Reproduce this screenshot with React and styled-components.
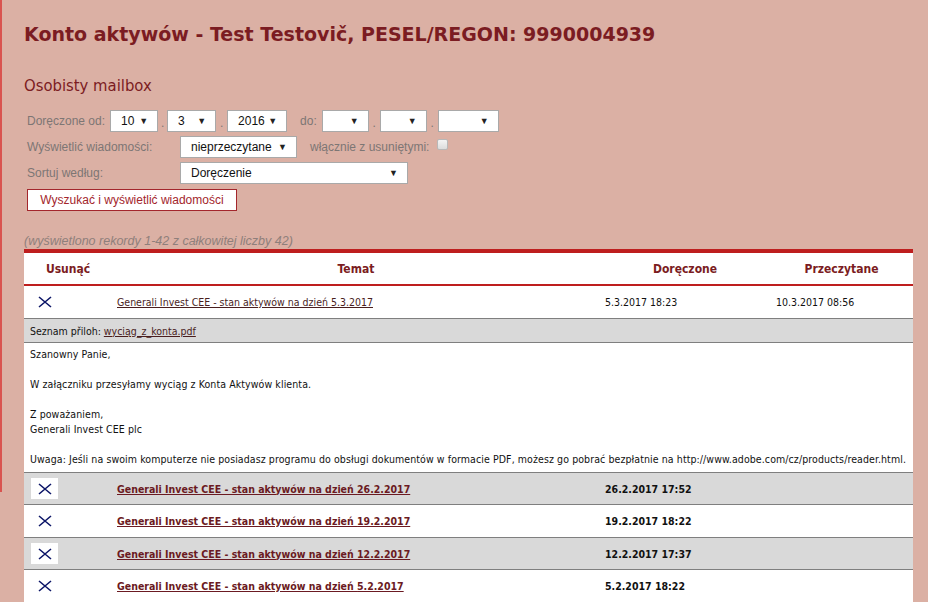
import React from 'react';
import styled, { createGlobalStyle } from 'styled-components';

const Global = createGlobalStyle`
  html, body { margin: 0; padding: 0; background: #dbb0a4; }
  body { font-family: "Liberation Sans", Arial, sans-serif; }
`;

const Page = styled.div`
  display: flex;
  align-items: flex-start;
  min-height: 602px;
`;

const Edge = styled.div`
  flex: 0 0 2px;
  height: 492px;
  background: #d9534f;
`;

const Content = styled.div`
  flex: 1;
  padding: 22px 15px 0 22px;
`;

const Title = styled.h1`
  margin: 0;
  font-family: "DejaVu Sans", Verdana, sans-serif;
  font-weight: bold;
  font-size: 19px;
  line-height: 24px;
  color: #7b1c22;
`;

const Subtitle = styled.h2`
  margin: 29px 0 0;
  font-family: "DejaVu Sans Condensed", "DejaVu Sans", Tahoma, sans-serif;
  font-weight: normal;
  font-size: 16.5px;
  line-height: 22px;
  color: #7b1c22;
`;

const Form = styled.div`
  margin: 13px 0 0 3px;
  display: flex;
  flex-direction: column;
  gap: 4px;
  align-items: flex-start;
`;

const Row = styled.div`
  display: flex;
  align-items: center;
  height: 22px;
`;

const Label = styled.span`
  font-size: 12px;
  color: #7d7674;
  width: ${p => (p.$w ? p.$w + 'px' : 'auto')};
  margin-left: ${p => (p.$ml ? p.$ml + 'px' : '0')};
  margin-right: ${p => (p.$mr ? p.$mr + 'px' : '0')};
  flex-shrink: 0;
`;

const Select = styled.div`
  box-sizing: border-box;
  height: 22px;
  width: ${p => p.$w}px;
  background: #fff;
  border: 1px solid #a9a9a9;
  display: flex;
  align-items: center;
  justify-content: space-between;
  padding: 0 9px 0 10px;
  font-size: 12px;
  color: #111;
`;

const Arrow = styled.span`
  font-size: 9px;
  color: #222;
`;

const Dot = styled.span`
  font-size: 12px;
  color: #7d7674;
  width: ${p => p.$w || 10}px;
  text-align: center;
  align-self: flex-end;
  line-height: 17px;
`;

const Checkbox = styled.span`
  box-sizing: border-box;
  width: 11px;
  height: 11px;
  border: 1px solid #b8b8b8;
  border-radius: 2px;
  background: linear-gradient(#f4f4f4, #dcdcdc);
  align-self: flex-start;
  margin-top: 3px;
  margin-left: 8px;
`;

const Button = styled.button`
  box-sizing: border-box;
  margin-top: 1px;
  height: 22px;
  width: 210px;
  background: #fff;
  border: 1px solid #a3262c;
  color: #a3262c;
  font-family: "Liberation Sans", Arial, sans-serif;
  font-size: 12px;
  padding: 0;
`;

const Info = styled.div`
  margin-top: 23px;
  font-size: 12.5px;
  font-style: italic;
  color: #8f7f7b;
  line-height: 15px;
`;

const Table = styled.div`
  width: 889px;
  background: #fff;
  border-top: 4px solid #be1e1e;
  font-family: "DejaVu Sans Condensed", "DejaVu Sans", Tahoma, sans-serif;
  font-size: 10.5px;
  color: #111;
`;

const cols = '88px 488px 170px 143px';

const HeadRow = styled.div`
  display: grid;
  grid-template-columns: ${cols};
  align-items: center;
  height: 31px;
  border-bottom: 2px solid #be1e1e;
`;

const Th = styled.div`
  text-align: center;
  font-weight: bold;
  font-size: 12px;
  color: #7b1c22;
`;

const DataRow = styled.div`
  display: grid;
  grid-template-columns: ${cols};
  align-items: center;
  height: ${p => p.$h || 31}px;
  background: ${p => (p.$gray ? '#d9d9d9' : '#fff')};
  border-bottom: 1px solid #7f7f7f;
  font-weight: ${p => (p.$bold ? 'bold' : 'normal')};
`;

const Cell = styled.div`
  padding-left: ${p => p.$pl ?? 5}px;
`;

const IconBox = styled.span`
  display: flex;
  align-items: center;
  justify-content: center;
  width: 27px;
  height: 21px;
  margin-left: 7px;
  background: #fff;
`;

const Link = styled.a`
  color: ${p => (p.$bold ? '#6b1a22' : '#4a1e1e')};
  text-decoration: underline;
  cursor: pointer;
`;

const AttachRow = styled.div`
  height: 23px;
  display: flex;
  align-items: center;
  padding-left: 6px;
  background: #d9d9d9;
  border-bottom: 1px solid #7f7f7f;
`;

const Body = styled.div`
  padding: 4px 6px 5px;
  line-height: 15px;
  border-bottom: 1px solid #7f7f7f;
  white-space: nowrap;
  letter-spacing: 0.09px;
`;

const Para = styled.p`
  margin: 0 0 15px;
  &:last-child { margin-bottom: 0; }
`;

const XIcon = () => (
  <svg width="14" height="12" viewBox="0 0 14 12">
    <path d="M1 1 L13 11 M13 1 L1 11" stroke="#0d1668" strokeWidth="1.6" fill="none" />
  </svg>
);

const rows = [
  { subj: '26.2.2017', date: '26.2.2017 17:52', h: 31 },
  { subj: '19.2.2017', date: '19.2.2017 18:22', h: 32 },
  { subj: '12.2.2017', date: '12.2.2017 17:37', h: 31 },
  { subj: '5.2.2017', date: '5.2.2017 18:22', h: 32 },
];

export default function App() {
  return (
    <>
      <Global />
      <Page>
        <Edge />
        <Content>
          <Title>Konto aktywów - Test Testovič, PESEL/REGON: 9990004939</Title>
          <Subtitle>Osobisty mailbox</Subtitle>
          <Form>
            <Row>
              <Label $mr={5}>Doręczone od:</Label>
              <Select $w={48}>10<Arrow>▼</Arrow></Select>
              <Dot $w={9}>.</Dot>
              <Select $w={49}>3<Arrow>▼</Arrow></Select>
              <Dot $w={11}>.</Dot>
              <Select $w={60}>2016<Arrow>▼</Arrow></Select>
              <Label $ml={13} $mr={5}>do:</Label>
              <Select $w={47}><span /><Arrow>▼</Arrow></Select>
              <Dot $w={11}>.</Dot>
              <Select $w={47}><span /><Arrow>▼</Arrow></Select>
              <Dot $w={11}>.</Dot>
              <Select $w={61}><span /><Arrow>▼</Arrow></Select>
            </Row>
            <Row>
              <Label $w={153}>Wyświetlić wiadomości:</Label>
              <Select $w={117}>nieprzeczytane<Arrow>▼</Arrow></Select>
              <Label $ml={13}>włącznie z usuniętymi:</Label>
              <Checkbox />
            </Row>
            <Row>
              <Label $w={153}>Sortuj według:</Label>
              <Select $w={228}>Doręczenie<Arrow>▼</Arrow></Select>
            </Row>
            <Button>Wyszukać i wyświetlić wiadomości</Button>
          </Form>
          <Info>(wyświetlono rekordy 1-42 z całkowitej liczby 42)</Info>
          <Table>
            <HeadRow>
              <Th>Usunąć</Th>
              <Th>Temat</Th>
              <Th>Doręczone</Th>
              <Th>Przeczytane</Th>
            </HeadRow>
            <DataRow $h={32}>
              <Cell $pl={0}><IconBox><XIcon /></IconBox></Cell>
              <Cell><Link>Generali Invest CEE - stan aktywów na dzień 5.3.2017</Link></Cell>
              <Cell>5.3.2017 18:23</Cell>
              <Cell $pl={6}>10.3.2017 08:56</Cell>
            </DataRow>
            <AttachRow>Seznam přiloh:&nbsp;<Link>wyciąg_z_konta.pdf</Link></AttachRow>
            <Body>
              <Para>Szanowny Panie,</Para>
              <Para>W załączniku przesyłamy wyciąg z Konta Aktywów klienta.</Para>
              <Para>Z poważaniem,<br />Generali Invest CEE plc</Para>
              <Para>Uwaga: Jeśli na swoim komputerze nie posiadasz programu do obsługi dokumentów w formacie PDF, możesz go pobrać bezpłatnie na http://www.adobe.com/cz/products/reader.html.</Para>
            </Body>
            {rows.map((r, i) => (
              <DataRow key={r.date} $gray={i % 2 === 0} $bold $h={r.h}>
                <Cell $pl={0}><IconBox><XIcon /></IconBox></Cell>
                <Cell><Link $bold>Generali Invest CEE - stan aktywów na dzień {r.subj}</Link></Cell>
                <Cell>{r.date}</Cell>
                <Cell />
              </DataRow>
            ))}
          </Table>
        </Content>
      </Page>
    </>
  );
}
